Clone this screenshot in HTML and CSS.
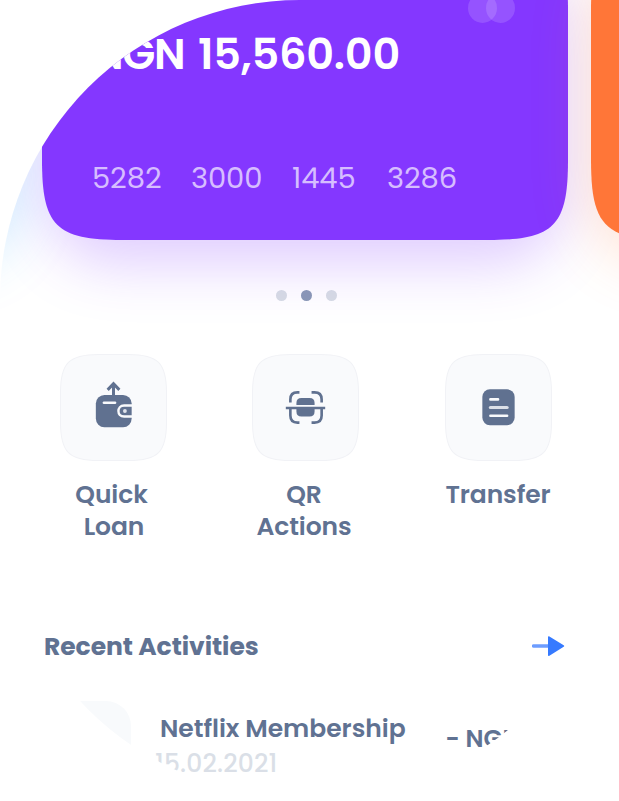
FILE: index.html
```html
<!DOCTYPE html>
<html lang="en">
<head>
<meta charset="utf-8">
<title>Wallet</title>
<link rel="stylesheet" href="styles.css">
</head>
<body>
<main class="screen">
  <section class="carousel">
    <article class="card card-blue"></article>
    <article class="card card-purple">
      <svg class="shape" viewBox="0 0 526 310"><path d="M0 80C0 14 14 0 80 0H446C512 0 526 14 526 80V230C526 296 512 310 446 310H80C14 310 0 296 0 230Z"/></svg>
      <div class="card-body">
        <div class="brand"><i></i><i></i></div>
        <div class="balance"><span class="currency">NGN</span><span class="amount">15,560.00</span></div>
        <div class="digits"><span>5282</span><span>3000</span><span>1445</span><span>3286</span></div>
      </div>
    </article>
    <article class="card card-orange">
      <svg class="shape" viewBox="0 0 526 310"><path d="M0 80C0 14 14 0 80 0H446C512 0 526 14 526 80V230C526 296 512 310 446 310H80C14 310 0 296 0 230Z"/></svg>
    </article>
  </section>
  <div class="dots"><i></i><i class="on"></i><i></i></div>
  <nav class="actions">
    <a class="action">
      <span class="tile"><svg viewBox="0 0 106 106">
        <path class="tile-bg" d="M.5 38C.5 9 9 .5 38 .5H68C97 .5 105.500 9 105.500 38V68C105.500 97 97 105.500 68 105.500H38C9 105.500 .5 97 .5 68Z"/>
        <rect class="ink" x="35.500" y="40.500" width="35.500" height="32" rx="8.500"/>
        <path class="ink-line" d="M53 42V30M47.200 35.500L53 29.500L58.800 35.500" stroke-width="3"/>
        <path class="cut" d="M43.500 48.300H54.500" stroke-width="2.600" stroke-linecap="round"/>
        <path class="cut" d="M72 51H63.500C56 51 56 62 63.500 62H72" stroke-width="2.400"/>
        <circle class="cut-dot" cx="64.300" cy="56.500" r="1.900"/>
      </svg></span>
      <span class="label">Quick<br><span class="nudge">Loan</span></span>
    </a>
    <a class="action">
      <span class="tile"><svg viewBox="0 0 106 106">
        <path class="tile-bg" d="M.5 38C.5 9 9 .5 38 .5H68C97 .5 105.500 9 105.500 38V68C105.500 97 97 105.500 68 105.500H38C9 105.500 .5 97 .5 68Z"/>
        <path class="ink" d="M44 50.500V48.500Q44 43.500 49 43.500H57Q62 43.500 62 48.500V50.500ZM44 54H62V57Q62 62 57 62H49Q44 62 44 57Z"/>
        <path class="ink-line" d="M33.500 53.500H72.500" stroke-width="2.600"/>
        <path class="ink-line" d="M38 48V45Q38 38 45 38H47M59 38H62Q69 38 69 45V48M38 54V61Q38 68 45 68H47M59 68H62Q69 68 69 61V54" stroke-width="2.600"/>
      </svg></span>
      <span class="label">QR<br>Actions</span>
    </a>
    <a class="action">
      <span class="tile"><svg viewBox="0 0 106 106">
        <path class="tile-bg" d="M.5 38C.5 9 9 .5 38 .5H68C97 .5 105.500 9 105.500 38V68C105.500 97 97 105.500 68 105.500H38C9 105.500 .5 97 .5 68Z"/>
        <rect class="ink" x="37" y="35" width="32" height="35.500" rx="7.500"/>
        <path class="cut" d="M45 45H52.500M45 61.200H61.500" stroke-width="2.600" stroke-linecap="round"/>
        <path class="cut soft" d="M45 53H61.500" stroke-width="3.200" stroke-linecap="round"/>
      </svg></span>
      <span class="label label-last">Transfer</span>
    </a>
  </nav>
  <header class="section-head">
    <h2>Recent Activities</h2>
    <svg class="arrow" viewBox="0 0 34 22"><path d="M1.500 11H18" stroke="#6d9dff" stroke-width="3.400" stroke-linecap="round"/><path d="M17 1.300L31.700 10.200Q33 11 31.700 11.800L17 20.900Q16 21.200 16 20V2.200Q16 1 17 1.300Z" fill="#367aff"/></svg>
  </header>
  <article class="entry">
    <div class="thumb"></div>
    <div class="entry-text"><div class="name">Netflix Membership</div><div class="date">15.02.2021</div></div>
    <div class="cost">- NGN</div>
  </article>
</main>
</body>
</html>
```
FILE: styles.css
```css
* { box-sizing: border-box; }
body { margin: 0; background: #fff; font-family: Poppins, Inter, "Liberation Sans", sans-serif; color: #607292; }
.screen { width: 619px; height: 797px; overflow: hidden; border-radius: 300px 0 300px 300px; background: #fff; }

.carousel { display: flex; gap: 23px; height: 239.500px; margin-left: -507px; }
.card { position: relative; flex: none; width: 526px; height: 310px; margin-top: -70.500px; border-radius: 72px; }
.card-blue { box-shadow: 0 20px 60px rgba(48, 170, 255, .27); }
.card-purple { fill: #8437ff; box-shadow: 0 28px 56px -4px rgba(132, 55, 255, .25); }
.card-orange { fill: #ff7638; box-shadow: 0 22px 60px rgba(255, 118, 56, .23); }
.shape { position: absolute; inset: 0; width: 526px; height: 310px; }
.card-body { position: relative; padding: 63.500px 50px 0; color: #fff; }
.brand { display: flex; justify-content: flex-end; height: 30px; padding-right: 3px; }
.brand i { width: 29px; height: 30px; border-radius: 50%; background: rgba(255, 255, 255, .14); }
.brand i + i { margin-left: -11px; background: rgba(255, 255, 255, .14); }
.balance { display: flex; justify-content: space-between; width: 308px; margin-top: 5px; font-size: 43px; font-weight: 600; line-height: 52px; white-space: nowrap; }
.currency { letter-spacing: -1.3px; }
.amount { letter-spacing: -.2px; }
.digits { display: grid; grid-template-columns: 99px 101px 95px 75px; margin-top: 80px; font-size: 29px; line-height: 36px; letter-spacing: -.1px; color: #d6bdff; }

.dots { display: flex; justify-content: center; gap: 14px; padding: 50px 7px 0 0; }
.dots i { width: 11px; height: 11px; border-radius: 50%; background: #d7dde4; }
.dots .on { background: #8a99b5; }

.actions { display: flex; justify-content: space-between; margin: 53.500px 57px 0 50px; }
.action { display: flex; flex-direction: column; align-items: center; width: 127px; }
.tile, .tile svg { display: block; width: 107px; height: 107px; }
.action:nth-child(2) .tile { margin-left: -1px; }
.tile-bg { fill: #f9fafc; stroke: #f1f2f6; }
.ink { fill: #607190; }
.ink-line { fill: none; stroke: #607190; }
.cut { fill: none; stroke: #f9fafc; }
.soft { stroke: #dce0e8; }
.cut-dot { fill: #dfe3eb; }
.label { position: relative; left: -2px; margin-top: 18px; font-size: 25px; font-weight: 600; line-height: 32px; text-align: center; letter-spacing: -.1px; }
.label-last { left: -.5px; }
.nudge { margin-left: 5px; }

.section-head { display: flex; justify-content: space-between; align-items: center; height: 36px; margin: 85px 53px 0 44px; }
h2 { margin: 0; padding-top: 1px; font-size: 25px; font-weight: 700; line-height: 36px; letter-spacing: -.05px; }
.arrow { width: 34px; height: 22px; }

.entry { display: flex; margin: 37px 0 0 44px; white-space: nowrap; }
.thumb { flex: none; width: 87px; height: 87px; border-radius: 25px; background: #f8fafc; }
.entry-text { width: 286px; padding: 10px 0 0 29px; }
.name { font-size: 25px; font-weight: 600; line-height: 36px; letter-spacing: -.03px; }
.date { margin-left: -5px; font-size: 25px; font-weight: 500; line-height: 34px; letter-spacing: .15px; color: #dadfe7; }
.cost { padding-top: 20px; margin-left: 28.500px; font-size: 24.500px; font-weight: 600; line-height: 36px; }
```
